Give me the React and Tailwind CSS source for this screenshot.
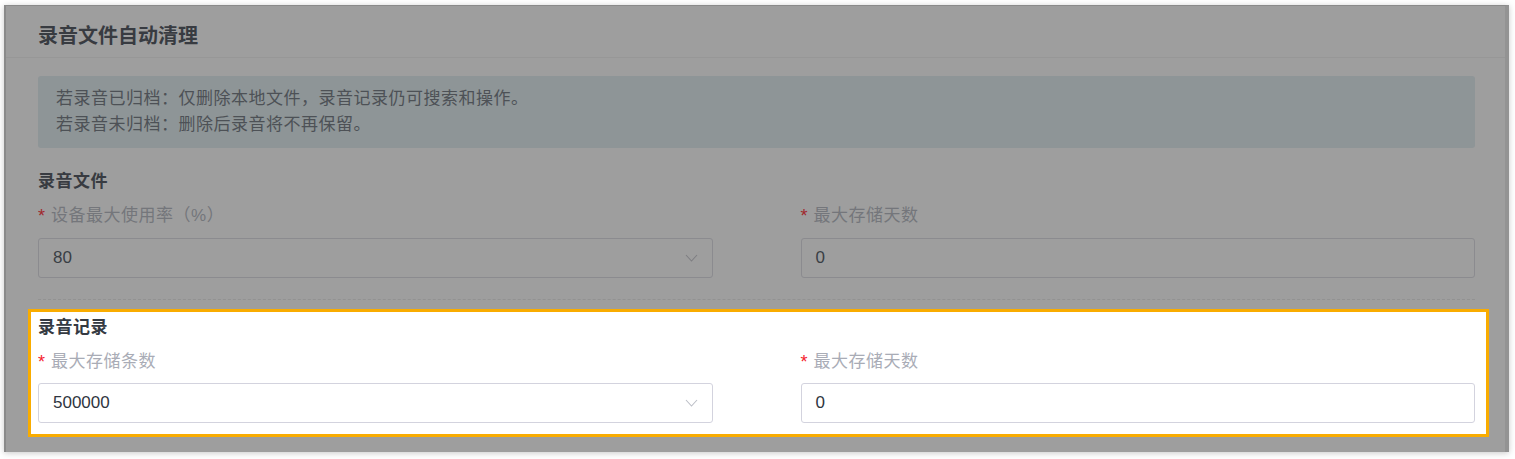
import React from 'react';

const font = { fontFamily: '"Liberation Sans", "Noto Sans CJK SC", sans-serif' };

const Chevron = ({ color }) => (
  <svg width="13" height="8" viewBox="0 0 13 8" fill="none">
    <path d="M1 1l5.5 6L12 1" stroke={color} strokeWidth="1.1" />
  </svg>
);

// 遮罩下的字段（变暗配色）
const DimField = ({ label, value, select }) => (
  <div className="flex flex-col">
    <div className="flex items-center h-[22px] text-[17px] leading-[22px]">
      <span className="text-[#a1282d] text-[18px] mr-[6px]">*</span>
      <span className="text-[#74767b] tracking-[0.5px]">{label}</span>
    </div>
    <div className="mt-[11px] h-[40px] rounded-[3px] border border-[#8b8b8f] flex items-center justify-between pl-[14px] pr-[14px] text-[17px] text-[#3a3e45]">
      <span>{value}</span>
      {select && <Chevron color="#7e7e82" />}
    </div>
  </div>
);

// 高亮区域内的字段
const Field = ({ label, value, select }) => (
  <div className="flex flex-col">
    <div className="flex items-center h-[22px] text-[17px] leading-[22px]">
      <span className="text-[#f5222d] text-[18px] mr-[6px]">*</span>
      <span className="text-[#a9acb6] tracking-[0.5px]">{label}</span>
    </div>
    <div className="mt-[10px] h-[40px] rounded-[3px] border border-[#d3d3de] bg-white flex items-center justify-between pl-[14px] pr-[14px] text-[17px] text-[#2f3540]">
      <span>{value}</span>
      {select && <Chevron color="#bcbfc7" />}
    </div>
  </div>
);

export default function App() {
  return (
    <div className="w-[1515px] h-[459px] bg-white pt-[5px] pl-[4px]" style={font}>
      <div className="w-[1505px] h-[447px] bg-[#9e9e9e] border-l-2 border-t border-r-4 border-l-[#8a8a8a] border-t-[#8a8a8a] border-r-[#939393] shadow-[0_1px_6px_rgba(0,0,0,0.22)] flex flex-col">
        {/* 标题 */}
        <div className="h-[52px] pt-[16px] pl-[32px] border-b border-[#979797]">
          <h2 className="text-[20px] leading-[28px] font-bold text-[#383b41]">录音文件自动清理</h2>
        </div>

        <div className="pl-[32px] pr-[30px] pt-[18px]">
          <div className="h-[72px] rounded-[3px] bg-[#8e9597] px-[18px] py-[10px] text-[17px] leading-[26px] tracking-[0.5px] text-[#4d5156]">
            <p>若录音已归档：仅删除本地文件，录音记录仍可搜索和操作。</p>
            <p>若录音未归档：删除后录音将不再保留。</p>
          </div>

          {/* 录音文件 */}
          <div className="mt-[23px] pb-[21px] border-b border-dashed border-[#929292]">
            <h3 className="text-[17px] leading-[22px] font-bold tracking-[0.5px] text-[#383b41]">录音文件</h3>
            <div className="mt-[12px] grid grid-cols-2 gap-x-[88px]">
              <DimField label="设备最大使用率（%）" value="80" select />
              <DimField label="最大存储天数" value="0" />
            </div>
          </div>

          {/* 录音记录 - 高亮 */}
          <div className="mt-[9px] ml-[-10px] mr-[-14px] border-[3px] border-[#f9ac00] bg-white pl-[7px] pr-[11px] pt-[5px] pb-[11px]">
            <h3 className="text-[17px] leading-[22px] font-bold tracking-[0.5px] text-[#353a42]">录音记录</h3>
            <div className="mt-[12px] grid grid-cols-2 gap-x-[88px]">
              <Field label="最大存储条数" value="500000" select />
              <Field label="最大存储天数" value="0" />
            </div>
          </div>
        </div>
      </div>
    </div>
  );
}
